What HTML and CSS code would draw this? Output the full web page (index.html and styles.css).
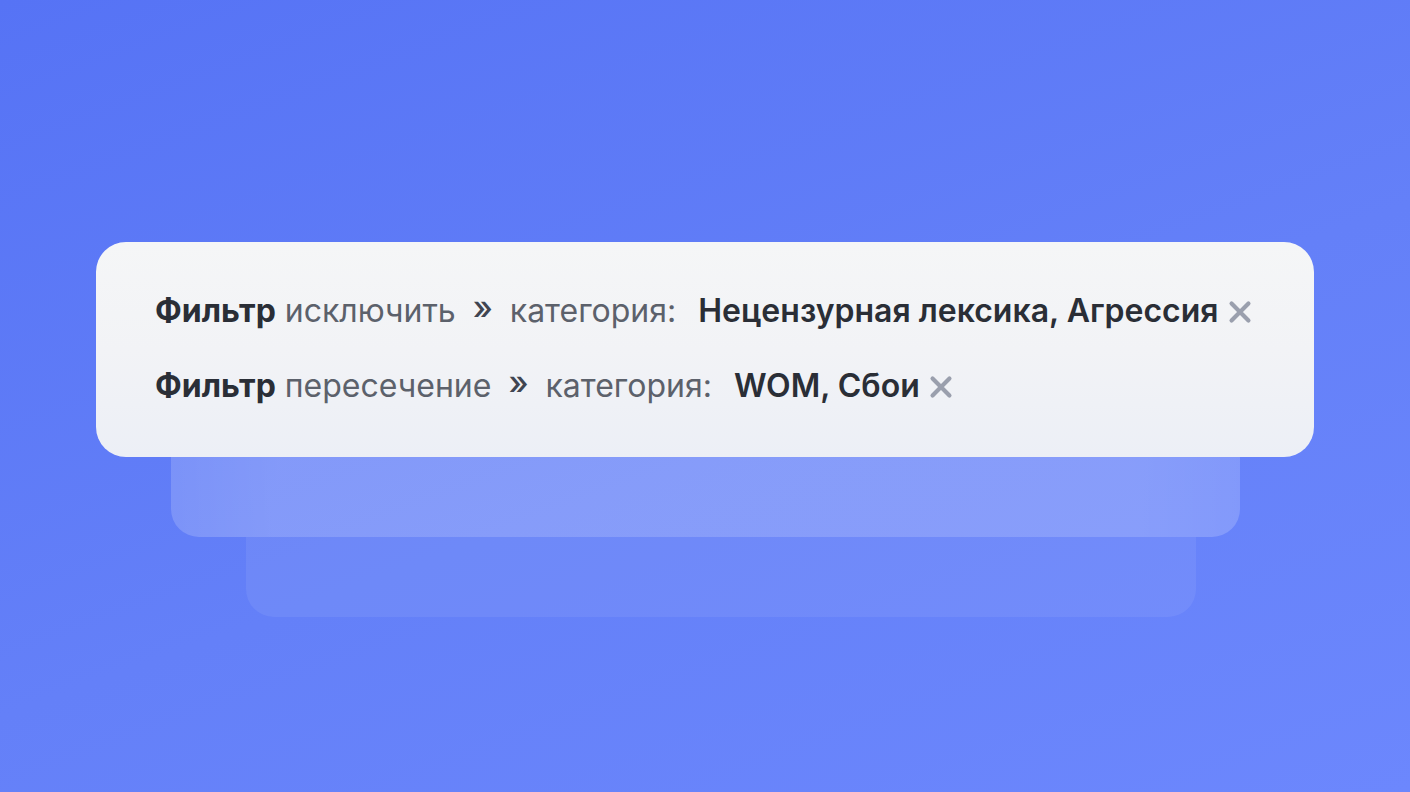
FILE: index.html
```html
<!DOCTYPE html>
<html lang="ru">
<head>
<meta charset="utf-8">
<title>Фильтры</title>
<link rel="stylesheet" href="styles.css">
</head>
<body>
<main class="stage">
  <section class="card">
    <div class="row">
      <span class="label"><b class="strong">Фильтр</b> исключить</span>
      <span class="chev">»</span>
      <span class="label">категория:</span>
      <span class="value">Нецензурная лексика, Агрессия</span>
      <svg class="close" viewBox="0 0 20 20" aria-hidden="true"><path d="M3.5 3.5 L16.5 16.5 M16.5 3.5 L3.5 16.5"/></svg>
    </div>
    <div class="row">
      <span class="label"><b class="strong">Фильтр</b> пересечение</span>
      <span class="chev">»</span>
      <span class="label">категория:</span>
      <span class="value">WOM, Сбои</span>
      <svg class="close" viewBox="0 0 20 20" aria-hidden="true"><path d="M3.5 3.5 L16.5 16.5 M16.5 3.5 L3.5 16.5"/></svg>
    </div>
  </section>
  <div class="layer layer-2"></div>
  <div class="layer layer-3"></div>
</main>
</body>
</html>
```

FILE: styles.css
```css
html, body {
  margin: 0;
  padding: 0;
  width: 1410px;
  height: 792px;
  overflow: hidden;
}
body {
  background: linear-gradient(160deg, #5673f5 0%, #6480f8 55%, #6c87fd 100%);
  font-family: Inter, "Noto Sans", sans-serif;
}
.stage {
  display: flex;
  flex-direction: column;
  align-items: center;
  padding-top: 242px;
}
.card {
  box-sizing: border-box;
  width: 1218px;
  height: 215px;
  border-radius: 30px;
  background: linear-gradient(180deg, #f5f6f7 0%, #f2f3f6 50%, #eceff6 100%);
  padding: 50px 59px 0;
  display: flex;
  flex-direction: column;
  gap: 37px;
  position: relative;
  z-index: 2;
}
.row {
  display: flex;
  align-items: center;
  height: 38px;
  font-size: 32px;
  line-height: 38px;
  white-space: nowrap;
}
.label {
  color: #5c616b;
  font-weight: 400;
}
.strong {
  color: #2a2e36;
  font-weight: 700;
}
.chev {
  color: #404551;
  font-size: 33px;
  font-weight: 500;
  margin: -9px 17px 0 17px;
}
.value {
  color: #2a2e36;
  font-weight: 600;
  margin-left: 22px;
}
.close {
  width: 26px;
  height: 26px;
  margin-left: 8px;
  margin-top: 2px;
  fill: none;
  stroke: #9a9fad;
  stroke-width: 3.2;
  stroke-linecap: round;
}
.layer {
  height: 80px;
  border-radius: 0 0 28px 28px;
}
.layer-2 {
  width: 1069px;
  background: linear-gradient(90deg, rgba(255,255,255,0.17) 0%, rgba(255,255,255,0.22) 10%, rgba(255,255,255,0.22) 90%, rgba(255,255,255,0.18) 100%);
  z-index: 1;
}
.layer-3 {
  width: 950px;
  margin-left: 32px;
  background: rgba(255,255,255,0.07);
}
```
